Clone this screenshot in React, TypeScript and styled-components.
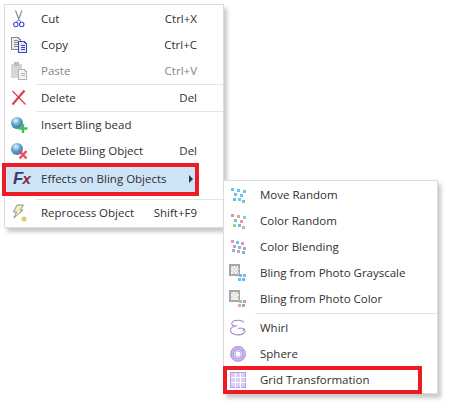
import React from "react";
import styled, { createGlobalStyle } from "styled-components";

const GlobalStyle = createGlobalStyle`
  html, body {
    margin: 0;
    padding: 0;
    background: #fff;
  }
  body {
    font-family: "Open Sans", "Liberation Sans", sans-serif;
    font-size: 11.5px;
    color: #2f2f33;
  }
`;

const Page = styled.div`
  position: relative;
  width: 452px;
  height: 408px;
  overflow: hidden;
  padding: 4px 0 0 4px;
  box-sizing: border-box;
`;

const MainMenu = styled.div`
  width: 220px;
  box-sizing: border-box;
  padding: 1px 0;
  background: #fff;
  border: 1px solid #dcdcdc;
  box-shadow: 3px 4px 4px rgba(0, 0, 0, 0.22);
`;

const SubMenu = styled(MainMenu)`
  position: absolute;
  left: 223px;
  top: 180px;
  width: 215px;
  padding-bottom: 0;
`;

const Row = styled.div<{ $disabled?: boolean; $gapAbove?: number }>`
  position: relative;
  display: grid;
  grid-template-columns: 36px 1fr auto;
  align-items: center;
  height: 26px;
  padding-right: 26px;
  margin-top: ${(p) => p.$gapAbove ?? 0}px;
  color: ${(p) => (p.$disabled ? "#85858a" : "inherit")};
`;

const IconCell = styled.div`
  display: flex;
  align-items: center;
  padding-left: 5px;
  position: relative;
  z-index: 1;
`;

const Label = styled.span`
  position: relative;
  z-index: 1;
  white-space: nowrap;
  padding-bottom: 2px;
`;

const Shortcut = styled.span`
  white-space: nowrap;
  padding-bottom: 2px;
`;

const Separator = styled.div<{ $above?: number; $below?: number }>`
  height: 1px;
  margin: ${(p) => p.$above ?? 0}px 0 ${(p) => p.$below ?? 0}px 31px;
  background: #e4e4e4;
`;

const Arrow = styled.span`
  position: absolute;
  left: 184px;
  top: 9px;
  z-index: 1;
  width: 0;
  height: 0;
  border-left: 4px solid #333;
  border-top: 4px solid transparent;
  border-bottom: 4px solid transparent;
`;

const HighlightBox = styled.div`
  position: absolute;
  left: -3px;
  top: -3px;
  width: 197px;
  height: 33px;
  box-sizing: border-box;
  border: 4px solid #ed1c24;
  background: #cde4f7;
`;

const OutlineBox = styled.div`
  position: absolute;
  left: -1px;
  top: -1px;
  width: 199px;
  height: 28px;
  box-sizing: border-box;
  border: 4px solid #ed1c24;
`;

const FxGlyph = styled.span`
  width: 18px;
  padding-left: 3px;
  box-sizing: border-box;
  font-family: "Liberation Sans", sans-serif;
  font-size: 17px;
  font-weight: 700;
  font-style: italic;
  line-height: 18px;
  letter-spacing: -1px;
  color: #433a6e;

  & b {
    color: #8a2a4a;
    font-size: 15px;
  }
`;

const Svg: React.FC<{ children: React.ReactNode; crisp?: boolean }> = ({ children, crisp }) => (
  <svg width="18" height="18" viewBox="0 0 18 18" shapeRendering={crisp ? "crispEdges" : undefined}>
    {children}
  </svg>
);

const Scissors = () => (
  <Svg>
    <path d="M5.5 0.5 L9 9.5 M12 0.5 L8.5 9.5" stroke="#8e8e98" strokeWidth="1.2" fill="none" />
    <path d="M8.8 9.5 L6.5 12 M8.8 9.5 L11 12" stroke="#5a5ad0" strokeWidth="1" fill="none" />
    <circle cx="5.8" cy="14.5" r="2.2" stroke="#4a4ad6" strokeWidth="1.1" fill="none" />
    <circle cx="11.7" cy="14.5" r="2.2" stroke="#4a4ad6" strokeWidth="1.1" fill="none" />
  </Svg>
);

const Copy = () => (
  <Svg crisp>
    <path d="M1.5 1.5 H8 L10 3.5 V13.5 H1.5 Z" fill="#ececec" stroke="#8a8a8a" />
    <path d="M3.5 4.5 H8 M3.5 6.5 H8 M3.5 8.5 H8 M3.5 10.5 H8" stroke="#8a8a8a" />
    <path d="M8.5 5.5 H14 L16.5 8 V16.5 H8.5 Z" fill="#e4e8fb" stroke="#3c46b8" />
    <path d="M10.5 9.5 H14.5 M10.5 11.5 H14.5 M10.5 13.5 H14.5" stroke="#3c46b8" />
  </Svg>
);

const Paste = () => (
  <Svg crisp>
    <rect x="1" y="2" width="11" height="14" rx="1" fill="#d6d6d6" />
    <rect x="4" y="0" width="5" height="4" fill="#bdbdbd" />
    <path d="M8.5 7.5 H14 L16.5 10 V17.5 H8.5 Z" fill="#f4f4f4" stroke="#b4b4b4" />
    <path d="M10.5 11.5 H14.5 M10.5 13.5 H14.5" stroke="#b4b4b4" />
  </Svg>
);

const DeleteX = () => (
  <Svg>
    <path d="M14.5 1.5 L2.5 15.5" stroke="#d8404a" strokeWidth="2.2" />
    <path d="M2.5 2 L15.5 15.5" stroke="#d8404a" strokeWidth="1.2" />
  </Svg>
);

const Bead = () => (
  <>
    <defs>
      <radialGradient id="bead" cx="0.4" cy="0.3" r="0.8">
        <stop offset="0" stopColor="#e8f4fb" />
        <stop offset="0.5" stopColor="#4f9fd0" />
        <stop offset="1" stopColor="#5a6a80" />
      </radialGradient>
    </defs>
    <circle cx="7" cy="7" r="6" fill="url(#bead)" />
  </>
);

const InsertBead = () => (
  <Svg>
    <Bead />
    <path d="M13 8 V17 M8.5 12.5 H17.5" stroke="#3cc45a" strokeWidth="2.4" />
  </Svg>
);

const DeleteBead = () => (
  <Svg>
    <Bead />
    <path d="M9.5 9 L16.5 16.5 M16.5 9 L9.5 16.5" stroke="#ea4a62" strokeWidth="2.4" />
  </Svg>
);

const Lightning = () => (
  <Svg>
    <path d="M7 1 H13.5 L10 6 H13 L4 14 L6.5 8 H3.5 Z" fill="#f5f0b8" stroke="#8f8f8f" strokeWidth="1" />
    <circle cx="14" cy="15" r="2" fill="#f0dc3c" stroke="#a8a050" strokeWidth="0.6" />
  </Svg>
);

type Dot = [number, number, string];

const blue = "#6cc3e6";
const pink = "#e58fb4";
const tan = "#e8a888";
const green = "#86d98a";
const mid = "#7cb4e4";

const Dots: React.FC<{ dots: Dot[] }> = ({ dots }) => (
  <>
    {dots.map(([x, y, c], i) => (
      <rect key={i} x={Math.round(x - 1.5)} y={Math.round(y - 1.5)} width="3" height="3" fill={c} />
    ))}
  </>
);

const spread: [number, number][] = [
  [3.3, 3.5], [9.5, 4], [15.3, 5.3], [6.7, 8.5], [12.3, 9.5], [5.3, 13.3], [10.3, 13.3], [14.3, 15.3],
];

const MoveRandom = () => (
  <Svg crisp>
    <Dots dots={spread.map(([x, y]) => [x, y, blue] as Dot)} />
  </Svg>
);

const randomColors = [pink, tan, green, blue, pink, green, blue, tan];

const ColorRandom = () => (
  <Svg crisp>
    <Dots dots={spread.map(([x, y], i) => [x, y, randomColors[i]] as Dot)} />
  </Svg>
);

const ColorBlending = () => (
  <Svg crisp>
    <Dots
      dots={[
        [3.3, 3.3, pink], [8.3, 4.3, blue], [13.3, 5.3, pink],
        [5.3, 8.3, pink], [10.3, 9.3, blue], [15.3, 10.3, pink],
        [4.3, 12.3, blue], [9.3, 13.3, pink], [14.3, 14.3, blue],
      ]}
    />
  </Svg>
);

const PhotoFrame: React.FC<{ colors: string[] }> = ({ colors }) => (
  <>
    <rect x="1" y="1" width="9" height="10" fill="#f2f2f2" stroke="#a6a6a6" strokeWidth="1.6" />
    {[2, 4, 6, 8].map((x, i) =>
      [2, 4, 6, 8].map((y, j) =>
        (i + j) % 2 === 0 ? <rect key={`${x}-${y}`} x={x} y={y} width="2" height="2" fill={colors[(i + j) % colors.length]} /> : null
      )
    )}
  </>
);

const PhotoGray = () => (
  <Svg crisp>
    <PhotoFrame colors={["#d8d8d8"]} />
    <Dots dots={[[11.5, 11.5, mid], [15.5, 11.5, blue], [10.5, 15.5, blue], [14.5, 15.5, mid]]} />
  </Svg>
);

const PhotoColor = () => (
  <Svg crisp>
    <PhotoFrame colors={["#f8c8dc", "#f8ecb0", "#c4e4f8"]} />
    <Dots dots={[[11.5, 11.5, green], [15.5, 11.5, pink], [10.5, 15.5, tan], [14.5, 15.5, mid]]} />
  </Svg>
);

const Whirl = () => (
  <Svg>
    <path
      d="M15 3.5 C13 0.5 5 0.5 3 3.5 C2 6 4 7 7 7 C11 7 2 6.5 1.5 11 C1.5 16.5 12 17 15 14 C17 11.5 16 9 12 9 L9 9.5 M15 9.5 L14 12"
      fill="none"
      stroke="#a78bd6"
      strokeWidth="1.1"
    />
  </Svg>
);

const Sphere = () => (
  <Svg>
    <circle cx="9" cy="9" r="7.2" fill="#e4d8f6" stroke="#b598e0" strokeWidth="1.5" />
    <circle cx="9" cy="9" r="5" fill="none" stroke="#b598e0" strokeWidth="1.5" />
    <circle cx="9" cy="9" r="3" fill="#fff" stroke="#c8b4ea" strokeWidth="1" />
  </Svg>
);

const GridIcon = () => (
  <Svg crisp>
    <rect x="1.5" y="1.5" width="15" height="15" fill="#dccff5" stroke="#b9a0e4" />
    <path d="M6.5 1.5 V16.5 M11.5 1.5 V16.5 M1.5 6.5 H16.5 M1.5 11.5 H16.5" stroke="#fff" />
  </Svg>
);

const FxIcon = () => (
  <FxGlyph>
    F<b>x</b>
  </FxGlyph>
);

export default function App() {
  return (
    <Page>
      <GlobalStyle />
      <MainMenu>
        <Row>
          <IconCell><Scissors /></IconCell>
          <Label>Cut</Label>
          <Shortcut>Ctrl+X</Shortcut>
        </Row>
        <Row>
          <IconCell><Copy /></IconCell>
          <Label>Copy</Label>
          <Shortcut>Ctrl+C</Shortcut>
        </Row>
        <Row $disabled>
          <IconCell><Paste /></IconCell>
          <Label>Paste</Label>
          <Shortcut>Ctrl+V</Shortcut>
        </Row>
        <Separator />
        <Row>
          <IconCell><DeleteX /></IconCell>
          <Label>Delete</Label>
          <Shortcut>Del</Shortcut>
        </Row>
        <Separator />
        <Row>
          <IconCell><InsertBead /></IconCell>
          <Label>Insert Bling bead</Label>
        </Row>
        <Row>
          <IconCell><DeleteBead /></IconCell>
          <Label>Delete Bling Object</Label>
          <Shortcut>Del</Shortcut>
        </Row>
        <Row $gapAbove={2}>
          <HighlightBox />
          <IconCell><FxIcon /></IconCell>
          <Label>Effects on Bling Objects</Label>
          <Arrow />
        </Row>
        <Separator $above={7} />
        <Row>
          <IconCell><Lightning /></IconCell>
          <Label>Reprocess Object</Label>
          <Shortcut>Shift+F9</Shortcut>
        </Row>
      </MainMenu>
      <SubMenu>
        <Row>
          <IconCell><MoveRandom /></IconCell>
          <Label>Move Random</Label>
        </Row>
        <Row>
          <IconCell><ColorRandom /></IconCell>
          <Label>Color Random</Label>
        </Row>
        <Row>
          <IconCell><ColorBlending /></IconCell>
          <Label>Color Blending</Label>
        </Row>
        <Row>
          <IconCell><PhotoGray /></IconCell>
          <Label>Bling from Photo Grayscale</Label>
        </Row>
        <Row>
          <IconCell><PhotoColor /></IconCell>
          <Label>Bling from Photo Color</Label>
        </Row>
        <Separator $above={1} $below={1} />
        <Row>
          <IconCell><Whirl /></IconCell>
          <Label>Whirl</Label>
        </Row>
        <Row>
          <IconCell><Sphere /></IconCell>
          <Label>Sphere</Label>
        </Row>
        <Row>
          <OutlineBox />
          <IconCell><GridIcon /></IconCell>
          <Label>Grid Transformation</Label>
        </Row>
      </SubMenu>
    </Page>
  );
}
